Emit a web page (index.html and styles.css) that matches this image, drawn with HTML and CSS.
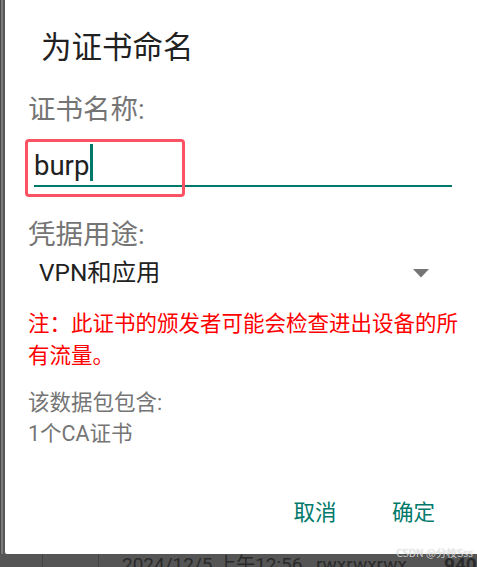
FILE: index.html
```html
<!DOCTYPE html>
<html lang="zh-CN">
<head>
<meta charset="utf-8">
<title>为证书命名</title>
<link rel="stylesheet" href="styles.css">
</head>
<body>
<div class="screen">
  <div class="main">
    <div class="edge"></div>
    <div class="dialog">
      <h1 class="title">为证书命名</h1>
      <div class="content">
        <div class="label label-name">证书名称:</div>
        <div class="field">
          <span class="value">burp</span><span class="cursor"></span>
          <div class="highlight"></div>
        </div>
        <div class="label label-usage">凭据用途:</div>
        <div class="spinner">
          <span class="spinner-text">VPN和应用</span>
          <svg class="caret" width="16" height="9" viewBox="0 0 16 9"><polygon points="0,0 16,0 8,8.5"/></svg>
        </div>
        <p class="warning">注：此证书的颁发者可能会检查进出设备的所有流量。</p>
        <div class="info">
          <div>该数据包包含:</div>
          <div>1个CA证书</div>
        </div>
      </div>
      <div class="actions">
        <button class="btn">取消</button>
        <button class="btn">确定</button>
      </div>
    </div>
  </div>
  <div class="bar">
    <div class="cell cell-a"></div>
    <div class="cell cell-b"></div>
    <span class="bar-date">2024/12/5 上午12:56</span>
    <span class="bar-perm">rwxrwxrwx</span>
    <span class="bar-size">940</span>
  </div>
  <div class="watermark">CSDN @分枝Sss</div>
</div>
</body>
</html>
```

FILE: styles.css
```css
html, body {
  margin: 0;
  padding: 0;
}

body {
  width: 477px;
  height: 567px;
  overflow: hidden;
  background: #555555;
  font-family: Roboto, "Noto Sans CJK SC", sans-serif;
}

.screen {
  position: relative;
  width: 477px;
  height: 567px;
  display: flex;
  flex-direction: column;
}

.main {
  display: flex;
  height: 554px;
}

.edge {
  width: 5px;
  background: linear-gradient(to right, #4b4b4b 0 1px, #7a7a7a 1px 3px, #585858 3px 5px);
}

.dialog {
  flex: 1;
  display: flex;
  flex-direction: column;
  background: #ffffff;
  border-bottom-left-radius: 2px;
}

.title {
  margin: 0;
  padding: 30px 0 0 36px;
  font-size: 30.5px;
  line-height: 36px;
  font-weight: 400;
  color: #212121;
}

.content {
  padding: 0 12px 0 23px;
}

.label {
  font-size: 27.5px;
  line-height: 34px;
  color: #757575;
}

.label-name {
  margin-top: 26.5px;
}

.field {
  position: relative;
  margin: 17.5px 13px 0 6px;
  padding-bottom: 1px;
  border-bottom: 2.5px solid #00796b;
  font-size: 27.5px;
  line-height: 36px;
  color: #212121;
}

.cursor {
  display: inline-block;
  width: 3px;
  height: 37px;
  margin-left: 1px;
  background: #00796b;
  vertical-align: -6px;
}

.highlight {
  position: absolute;
  left: -9px;
  top: -5px;
  width: 160px;
  height: 58px;
  box-sizing: border-box;
  border: 3px solid #fb5264;
  border-radius: 4px;
}

.label-usage {
  margin-top: 30.5px;
}

.spinner {
  margin-top: 5.5px;
  display: flex;
  align-items: center;
  justify-content: space-between;
  padding: 0 36px 0 11px;
  font-size: 24.4px;
  line-height: 32px;
  color: #212121;
}

.caret {
  display: block;
  fill: #757575;
}

.warning {
  margin: 18.75px 0 0;
  font-size: 21.5px;
  line-height: 32.5px;
  color: #ff0000;
}

.info {
  margin-top: 14.25px;
  font-size: 21.5px;
  line-height: 31px;
  color: #757575;
}

.actions {
  display: flex;
  justify-content: flex-end;
  gap: 2.5px;
  padding: 37px 15.5px 0 0;
}

.btn {
  min-width: 96px;
  height: 54px;
  padding: 0 12px;
  border: 0;
  background: none;
  font-family: inherit;
  font-size: 21.5px;
  line-height: 54px;
  color: #00796b;
}

.bar {
  display: flex;
  height: 13px;
  overflow: hidden;
  background: #555555;
  color: #2a2a2a;
  font-size: 19px;
  line-height: 19px;
  white-space: nowrap;
}

.cell {
  height: 13px;
  border-right: 1px solid #444444;
}

.cell-a {
  width: 42px;
}

.cell-b {
  width: 55px;
}

.bar-date {
  width: 194px;
  margin-top: 1px;
  padding-left: 23px;
  box-sizing: border-box;
  flex: none;
}

.bar-perm {
  width: 128px;
  margin-top: 1px;
  padding-left: 23px;
  flex: none;
}

.bar-size {
  margin-top: 1px;
  font-weight: 700;
  flex: none;
}

.watermark {
  position: absolute;
  right: 4px;
  top: 547px;
  font-family: "Noto Sans CJK SC", sans-serif;
  font-size: 10.5px;
  line-height: 12px;
  color: rgba(255, 255, 255, 0.75);
  text-shadow: 0 0 1px rgba(0, 0, 0, 0.35);
}
```
